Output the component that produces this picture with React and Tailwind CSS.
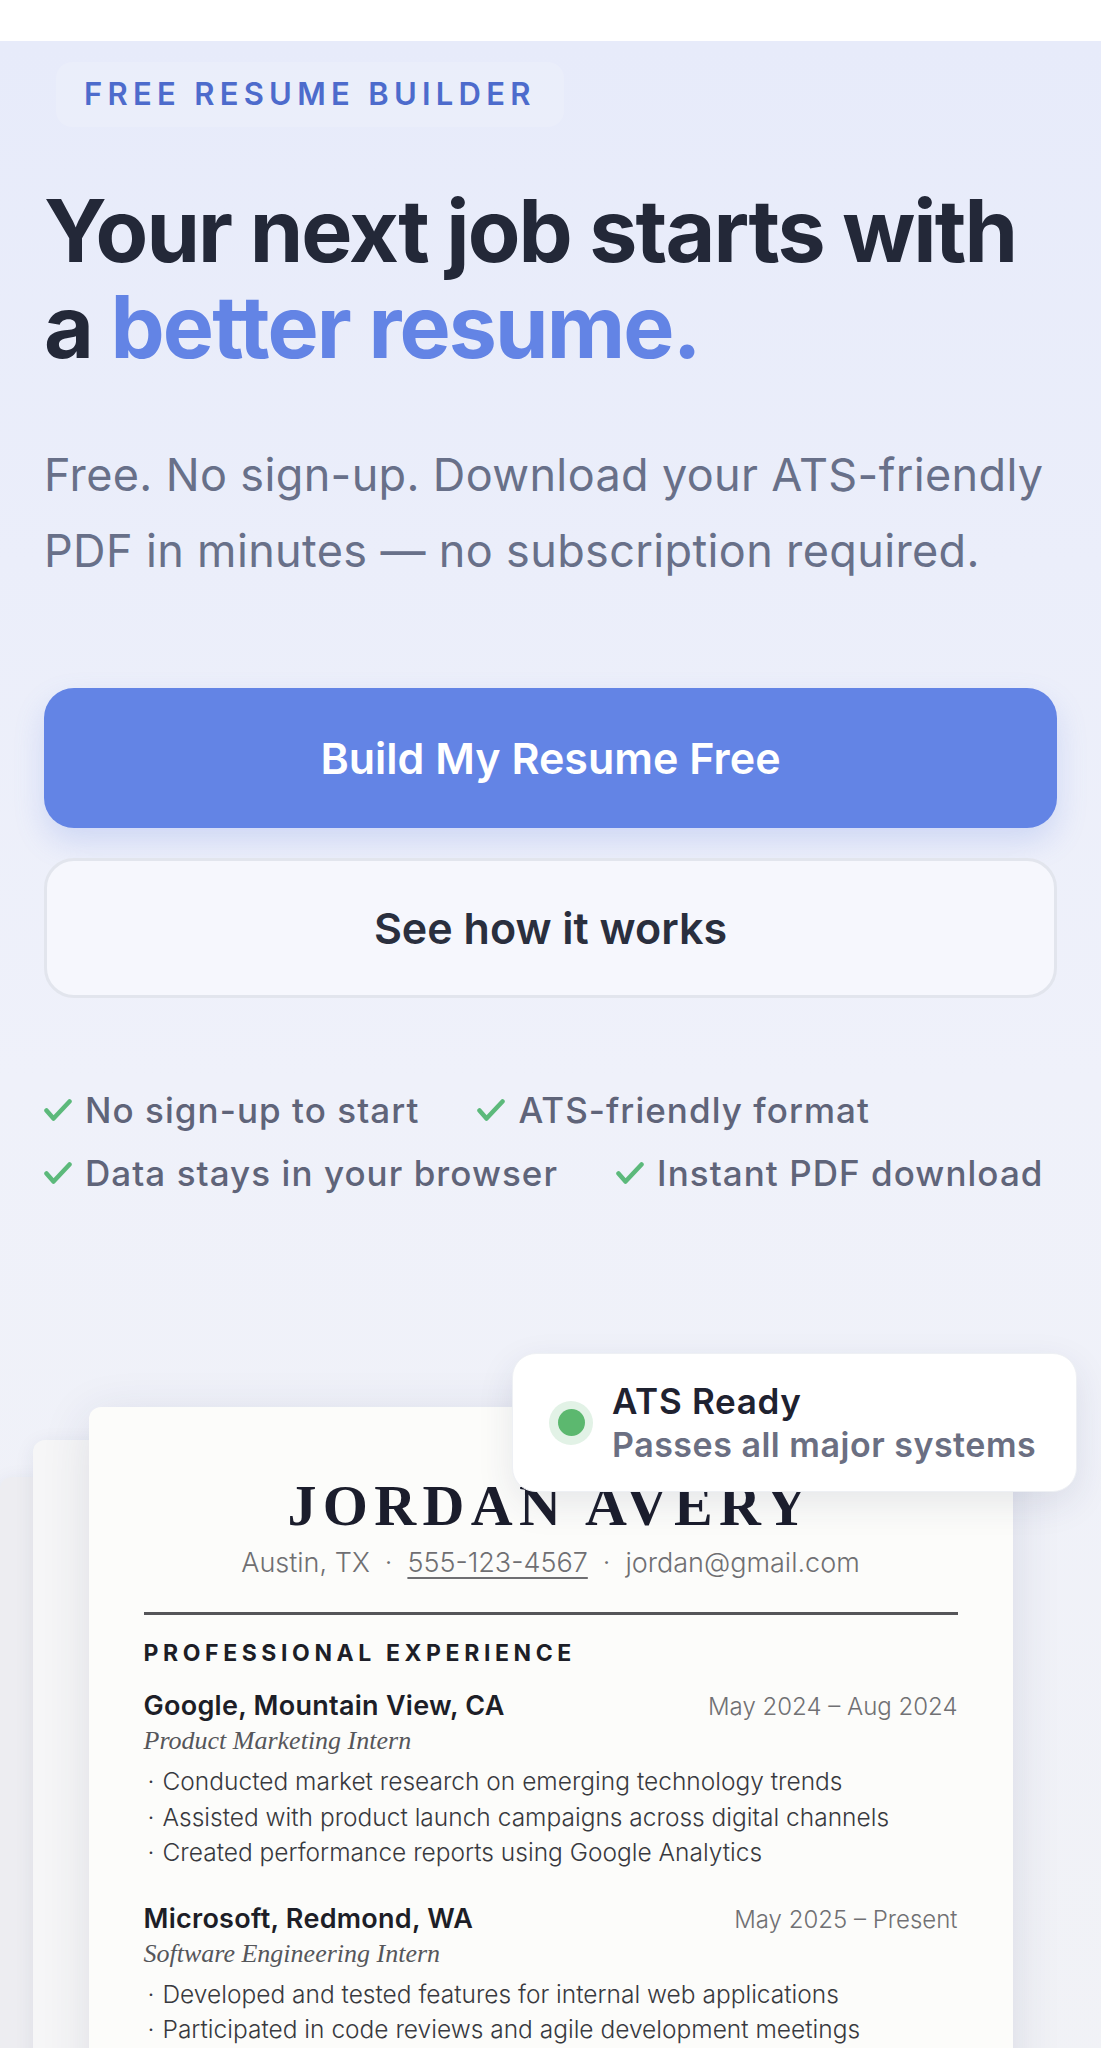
import React from "react";

const checks = [
  "No sign-up to start",
  "ATS-friendly format",
  "Data stays in your browser",
  "Instant PDF download",
];

const jobs = [
  {
    company: "Google, Mountain View, CA",
    dates: "May 2024 – Aug 2024",
    role: "Product Marketing Intern",
    bullets: [
      "Conducted market research on emerging technology trends",
      "Assisted with product launch campaigns across digital channels",
      "Created performance reports using Google Analytics",
    ],
  },
  {
    company: "Microsoft, Redmond, WA",
    dates: "May 2025 – Present",
    role: "Software Engineering Intern",
    bullets: [
      "Developed and tested features for internal web applications",
      "Participated in code reviews and agile development meetings",
    ],
  },
];

function CheckMark() {
  return (
    <svg width="28" height="22" viewBox="0 0 28 22" className="shrink-0">
      <path
        d="M2.5 11.5 L9.5 19.5 L25.5 2.5"
        fill="none"
        stroke="#5cb97b"
        strokeWidth="4.5"
        strokeLinecap="round"
        strokeLinejoin="round"
      />
    </svg>
  );
}

function App() {
  return (
    <div className="min-h-screen bg-white font-['Inter','Noto_Sans',sans-serif]">
      <div className="h-[41px] bg-white" />
      <section className="relative overflow-hidden bg-gradient-to-b from-[#e7ebfa] via-[#eff1fa] to-[#f1f2f6] px-[44px] pt-[21px]">
        <div className="ml-[12px] inline-flex h-[65px] items-center rounded-2xl bg-white/15 px-[28px]">
          <span className="text-[31px] font-semibold uppercase tracking-[0.17em] text-[#4d6bcc]">
            Free Resume Builder
          </span>
        </div>

        <h1 className="mt-[56px] text-[86px] font-bold leading-[96px] tracking-[-0.022em] text-[#232838]">
          Your next job starts with
          <br />a <span className="text-[#6384e5]">better resume.</span>
        </h1>

        <p className="mt-[62px] text-[45px] leading-[76px] tracking-[0.008em] text-[#687089]">
          Free. No sign-up. Download your ATS-friendly PDF in minutes — no
          subscription required.
        </p>

        <div className="mt-[99px] flex flex-col gap-[30px]">
          <button className="h-[140px] w-full rounded-[30px] bg-[#6384e5] text-[43px] font-semibold text-white shadow-[0_14px_30px_rgba(99,132,229,0.22)]">
            Build My Resume Free
          </button>
          <button className="h-[140px] w-full rounded-[30px] border-[3px] border-[#e2e5ed] bg-[#f6f7fd] text-[43px] font-semibold text-[#2a2f3e]">
            See how it works
          </button>
        </div>

        <div className="mt-[88px] flex flex-wrap gap-x-[58px] gap-y-[15px]">
          {checks.map((c) => (
            <div key={c} className="flex items-center gap-[13px]">
              <CheckMark />
              <span className="text-[35px] font-medium leading-[48px] tracking-[0.03em] text-[#5f6479]">
                {c}
              </span>
            </div>
          ))}
        </div>

        <div className="relative -mx-[44px] mt-[156px] pt-[54px]">
          <div className="absolute left-0 top-[124px] h-[900px] w-[860px] rounded-[12px] bg-[#ededf1] shadow-[0_4px_20px_rgba(40,50,90,0.08)]" />
          <div className="absolute left-[33px] top-[87px] h-[900px] w-[900px] rounded-[12px] bg-[#f6f6f7] shadow-[0_4px_20px_rgba(40,50,90,0.08)]" />

          <div className="relative mx-auto w-[924px] rounded-[12px] bg-[#fcfcfa] px-[55px] pb-[60px] pt-[70px] shadow-[0_10px_50px_rgba(40,50,90,0.12)]">
            <div className="text-center font-['Liberation_Serif',serif] text-[58px] font-bold uppercase leading-[58px] tracking-[0.11em] text-[#1b1d2c]">
              Jordan Avery
            </div>
            <div className="mt-[10px] text-center text-[27px] font-light leading-[36px] text-[#6f6f72]">
              Austin, TX<span className="mx-[15px]">·</span>
              <span className="underline decoration-[2px] underline-offset-[5px]">
                555-123-4567
              </span>
              <span className="mx-[15px]">·</span>jordan@gmail.com
            </div>
            <div className="mt-[31px] h-[3px] bg-[#555558]" />
            <div className="mt-[22px] text-[23px] font-bold uppercase leading-[32px] tracking-[0.2em] text-[#1d1e27]">
              Professional Experience
            </div>

            {jobs.map((job, i) => (
              <div key={job.company} className={i === 0 ? "mt-[19px]" : "mt-[30px]"}>
                <div className="flex items-baseline justify-between">
                  <span className="text-[27px] font-semibold leading-[36px] tracking-[0.01em] text-[#1d1e27]">
                    {job.company}
                  </span>
                  <span className="text-[24px] font-light leading-[36px] text-[#707073]">
                    {job.dates}
                  </span>
                </div>
                <div className="font-['Liberation_Serif',serif] text-[26px] italic leading-[32px] text-[#55565a]">
                  {job.role}
                </div>
                <ul className="mt-[7px]">
                  {job.bullets.map((b) => (
                    <li
                      key={b}
                      className="flex text-[24.5px] font-light leading-[35.5px] text-[#38393e]"
                    >
                      <span className="w-[19px] pl-[4px]">·</span>
                      {b}
                    </li>
                  ))}
                </ul>
              </div>
            ))}
          </div>

          <div className="absolute right-[24px] top-0 flex h-[139px] w-[565px] items-center gap-[19px] rounded-[24px] border border-[#eef0f4] bg-white pl-[36px] shadow-[0_12px_36px_rgba(40,50,90,0.10)]">
            <div className="flex h-[44px] w-[44px] items-center justify-center rounded-full bg-[#e2f2e6]">
              <div className="h-[27px] w-[27px] rounded-full bg-[#5cb86f]" />
            </div>
            <div>
              <div className="text-[35px] font-semibold leading-[43px] tracking-[0.02em] text-[#1f2230]">
                ATS Ready
              </div>
              <div className="text-[34px] font-semibold leading-[43px] tracking-[0.015em] text-[#6b6f82]">
                Passes all major systems
              </div>
            </div>
          </div>
        </div>
      </section>
    </div>
  );
}

export default App;
